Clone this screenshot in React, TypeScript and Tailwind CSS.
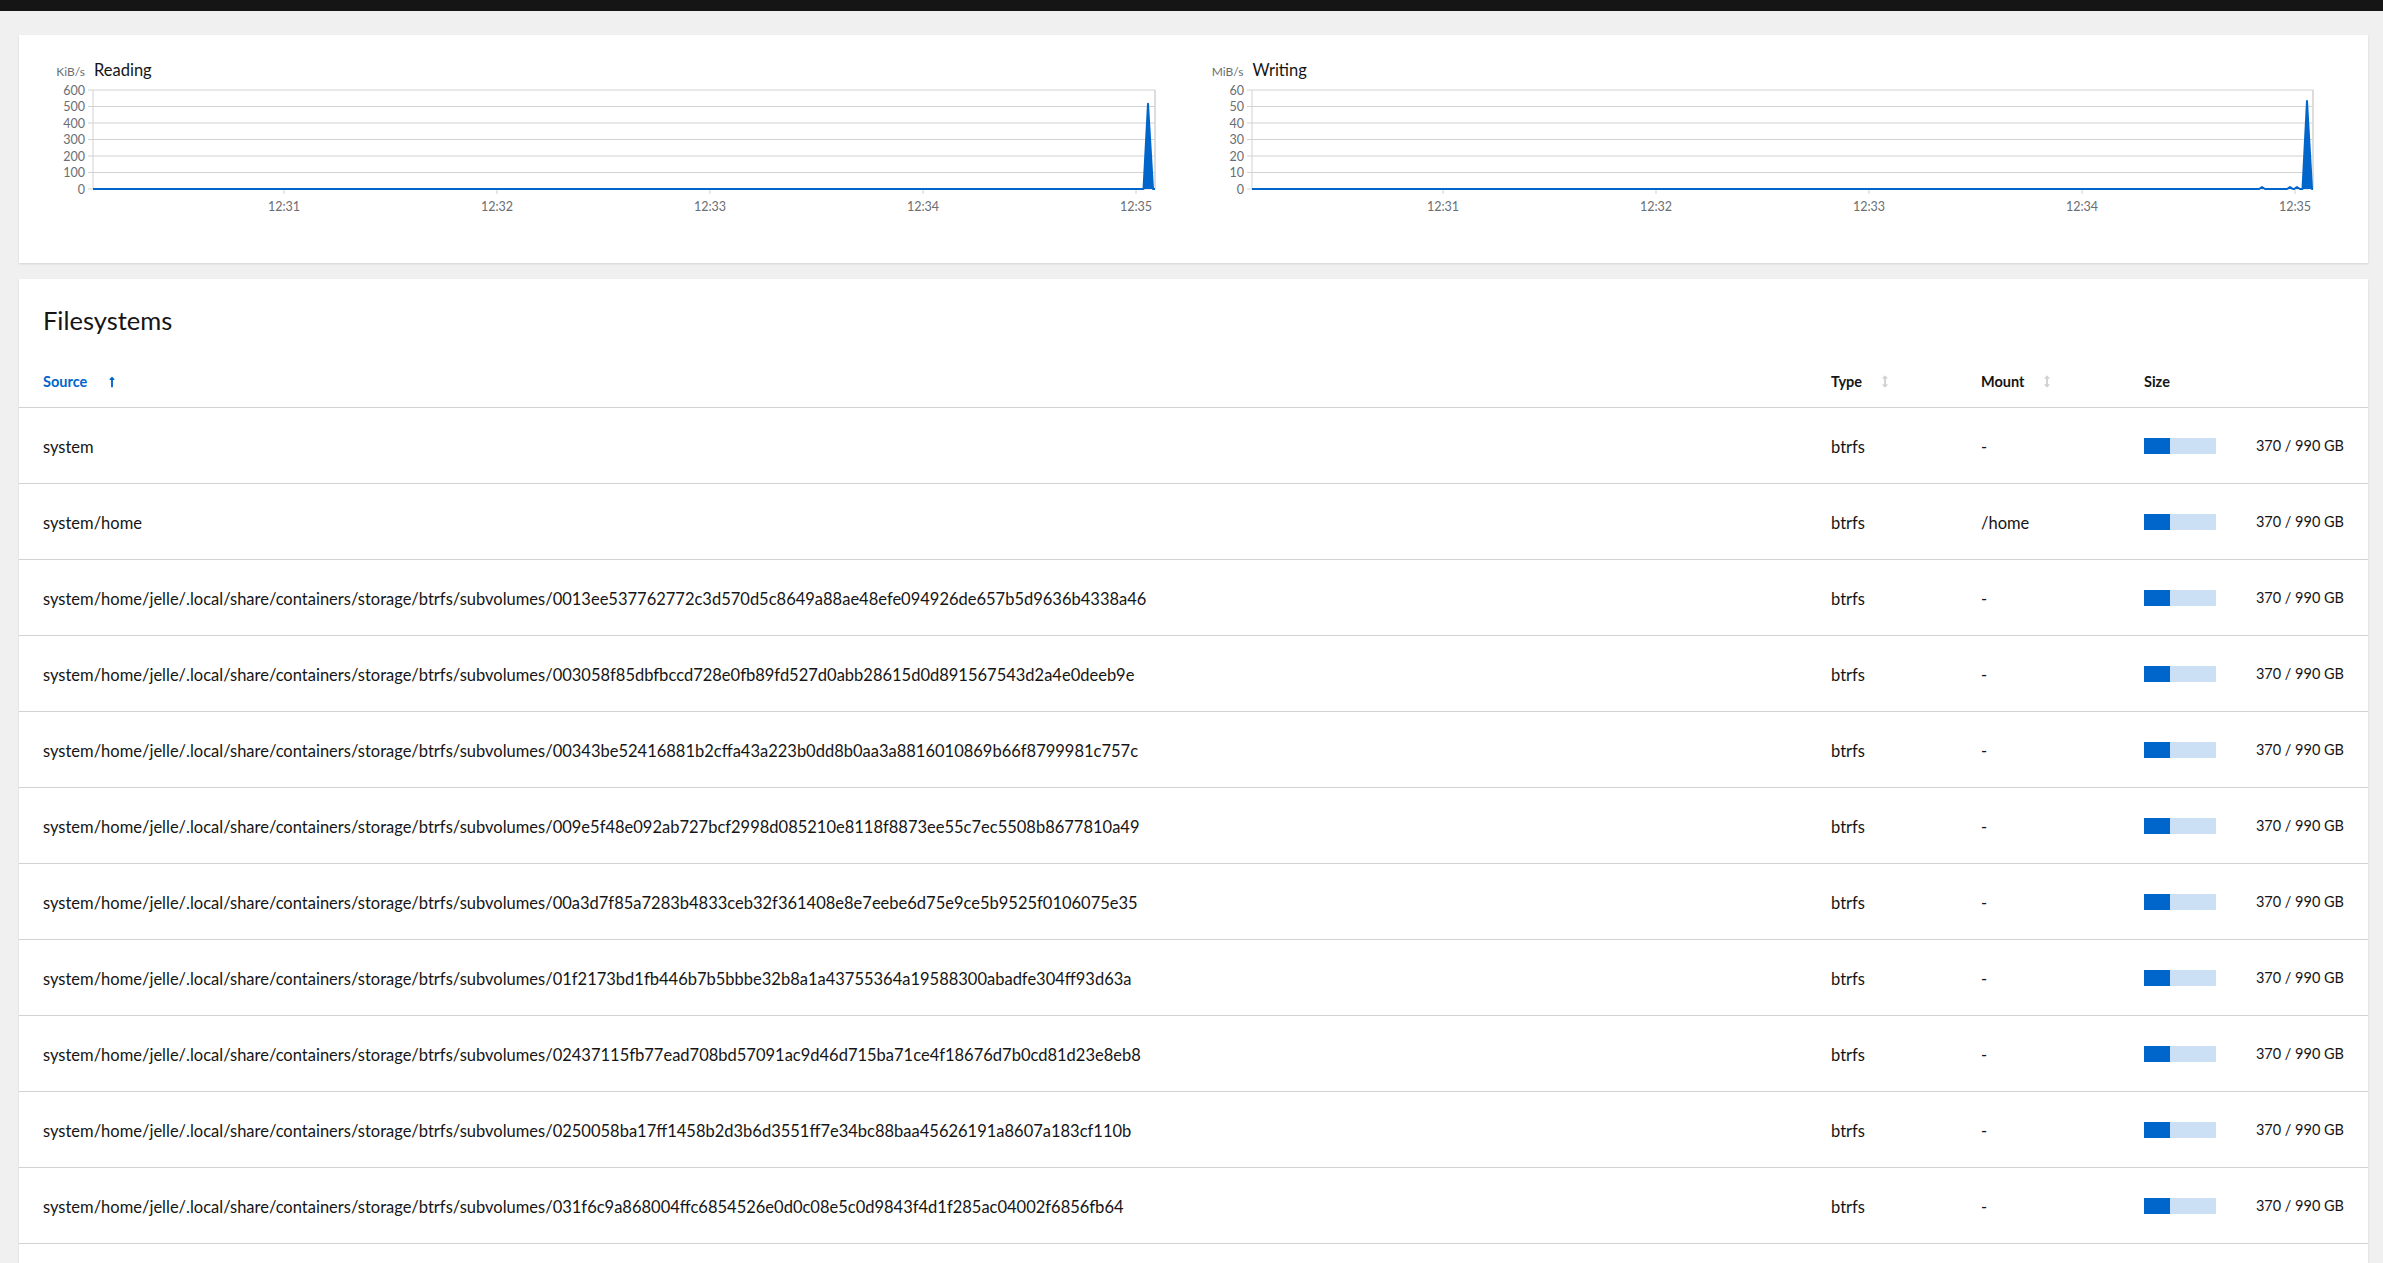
import React from "react";

const PREFIX = "system/home/jelle/.local/share/containers/storage/btrfs/subvolumes/";
const ROWS: { source: string; mount: string }[] = [
  { source: "system", mount: "-" },
  { source: "system/home", mount: "/home" },
  { source: PREFIX + "0013ee537762772c3d570d5c8649a88ae48efe094926de657b5d9636b4338a46", mount: "-" },
  { source: PREFIX + "003058f85dbfbccd728e0fb89fd527d0abb28615d0d891567543d2a4e0deeb9e", mount: "-" },
  { source: PREFIX + "00343be52416881b2cffa43a223b0dd8b0aa3a8816010869b66f8799981c757c", mount: "-" },
  { source: PREFIX + "009e5f48e092ab727bcf2998d085210e8118f8873ee55c7ec5508b8677810a49", mount: "-" },
  { source: PREFIX + "00a3d7f85a7283b4833ceb32f361408e8e7eebe6d75e9ce5b9525f0106075e35", mount: "-" },
  { source: PREFIX + "01f2173bd1fb446b7b5bbbe32b8a1a43755364a19588300abadfe304ff93d63a", mount: "-" },
  { source: PREFIX + "02437115fb77ead708bd57091ac9d46d715ba71ce4f18676d7b0cd81d23e8eb8", mount: "-" },
  { source: PREFIX + "0250058ba17ff1458b2d3b6d3551ff7e34bc88baa45626191a8607a183cf110b", mount: "-" },
  { source: PREFIX + "031f6c9a868004ffc6854526e0d0c08e5c0d9843f4d1f285ac04002f6856fb64", mount: "-" },
];

const TICKS = ["12:31", "12:32", "12:33", "12:34", "12:35"];

type ChartProps = {
  unit: string;
  title: string;
  labels: string[];
  axisX: number;
  plotW: number;
  peak: number;
  bumps?: number[];
};

function Chart({ unit, title, labels, axisX, plotW, peak, bumps = [] }: ChartProps) {
  const top = 9;
  const bottom = 108;
  const step = (bottom - top) / 6;
  const right = axisX + plotW;
  const peakY = bottom - (bottom - top) * peak;
  const bx = (o: number) => axisX + o;
  let d = `M${axisX},${bottom}`;
  for (const b of bumps) {
    d += ` L${bx(b - 3)},${bottom} L${bx(b)},${bottom - 2} L${bx(b + 3)},${bottom}`;
  }
  d += ` L${bx(1050.5)},${bottom} L${bx(1055)},${peakY} L${bx(1060)},${bottom} L${right},${bottom}`;
  return (
    <div className="flex flex-col">
      <div className="flex items-baseline h-[22px]">
        <span
          className="text-right text-[12px] text-[#6a6e73] leading-[22px]"
          style={{ width: axisX - 8 }}
        >
          {unit}
        </span>
        <span className="ml-[9px] text-[16.5px] text-[#151515] leading-[22px]">{title}</span>
      </div>
      <svg width="100%" height={140} className="block">
        {labels.map((l, i) => {
          const y = top + i * step;
          return (
            <g key={l}>
              <line x1={axisX - 5} x2={right} y1={y} y2={y} stroke="#d2d2d2" strokeWidth={1} />
              <text x={axisX - 8} y={y + 4.5} textAnchor="end" fontSize={12.5} fill="#6a6e73">
                {l}
              </text>
            </g>
          );
        })}
        <line x1={axisX} x2={axisX} y1={top} y2={bottom} stroke="#d2d2d2" strokeWidth={1} />
        <line x1={right} x2={right} y1={top} y2={bottom} stroke="#d2d2d2" strokeWidth={1.5} />
        {TICKS.map((t, i) => {
          const x = axisX + 191 + 213 * i;
          return (
            <g key={t}>
              <line x1={x} x2={x} y1={bottom} y2={bottom + 5} stroke="#d2d2d2" strokeWidth={1} />
              <text x={x} y={bottom + 22} textAnchor="middle" fontSize={12.5} fill="#6a6e73">
                {t}
              </text>
            </g>
          );
        })}
        <path d={d + ` Z`} fill="#0066cc" />
        <path d={d} fill="none" stroke="#0066cc" strokeWidth={2} strokeLinejoin="round" />
      </svg>
    </div>
  );
}

function SortUp() {
  return (
    <svg viewBox="0 0 256 512" className="w-[6px] h-[12px]" fill="#0066cc">
      <path d="M88 166.059V468c0 6.627 5.373 12 12 12h56c6.627 0 12-5.373 12-12V166.059h46.059c21.382 0 32.09-25.851 16.971-40.971l-86.059-86.059c-9.373-9.373-24.569-9.373-33.941 0l-86.059 86.059c-15.119 15.119-4.411 40.971 16.971 40.971H88z" />
    </svg>
  );
}

function SortNone() {
  return (
    <svg viewBox="0 0 256 512" className="w-[6px] h-[13px]" fill="#d2d2d2">
      <path d="M214.059 377.941H168V134.059h46.059c21.382 0 32.09-25.851 16.971-40.971L144.971 7.029c-9.373-9.373-24.568-9.373-33.941 0L24.971 93.088c-15.119 15.119-4.411 40.971 16.971 40.971H88v243.882H41.941c-21.382 0-32.09 25.851-16.971 40.971l86.059 86.059c9.373 9.373 24.568 9.373 33.941 0l86.059-86.059c15.12-15.119 4.412-40.971-16.97-40.971z" />
    </svg>
  );
}

export default function App() {
  return (
    <div className="min-h-screen bg-[#f0f0f0] font-['Lato',sans-serif] text-[#151515]">
      <div className="h-[11px] bg-[#151515]" />
      <div className="pl-[19px] pr-[15px] pt-[24px] flex flex-col gap-[16px]">
        <div className="bg-white h-[228px] px-6 pt-[24px] shadow-[0_1px_2px_rgba(3,3,3,0.12)]">
          <div className="grid grid-cols-2 gap-6">
            <Chart
              unit="KiB/s"
              title="Reading"
              labels={["600", "500", "400", "300", "200", "100", "0"]}
              axisX={50}
              plotW={1062}
              peak={517 / 600}
            />
            <Chart
              unit="MiB/s"
              title="Writing"
              labels={["60", "50", "40", "30", "20", "10", "0"]}
              axisX={46}
              plotW={1061}
              peak={53.3 / 60}
              bumps={[1010, 1038, 1045]}
            />
          </div>
        </div>

        <div className="bg-white pb-[60px] shadow-[0_1px_2px_rgba(3,3,3,0.12)]">
          <div className="px-6 pt-[23px] pb-[16px]">
            <h2 className="text-[25.5px] leading-[36px] font-normal">Filesystems</h2>
          </div>
          <div className="flex items-center h-[54px] px-6 pt-[2px] border-b border-[#d2d2d2] text-[14.5px] font-bold">
            <div className="flex-1 min-w-0 flex items-center">
              <span className="text-[#0066cc]">Source</span>
              <span className="ml-[22px] flex items-center"><SortUp /></span>
            </div>
            <div className="w-[150px] flex items-center">
              <span>Type</span>
              <span className="ml-[20px] flex items-center"><SortNone /></span>
            </div>
            <div className="w-[163px] flex items-center">
              <span>Mount</span>
              <span className="ml-[20px] flex items-center"><SortNone /></span>
            </div>
            <div className="w-[200px]">Size</div>
          </div>
          {ROWS.map((r) => (
            <div
              key={r.source}
              className="flex items-center h-[76px] px-6 pt-[3px] border-b border-[#d2d2d2] text-[16.5px]"
            >
              <div className="flex-1 min-w-0 whitespace-nowrap">{r.source}</div>
              <div className="w-[150px]">btrfs</div>
              <div className="w-[163px]">{r.mount}</div>
              <div className="w-[200px] flex items-center">
                <div className="w-[72px] h-[16px] -mt-[3px] bg-[#cce0f5] flex">
                  <div className="w-[26px] h-full bg-[#0066cc]" />
                </div>
                <span className="ml-auto text-[14.5px] -mt-[2px]">370 / 990 GB</span>
              </div>
            </div>
          ))}
        </div>
      </div>
    </div>
  );
}
